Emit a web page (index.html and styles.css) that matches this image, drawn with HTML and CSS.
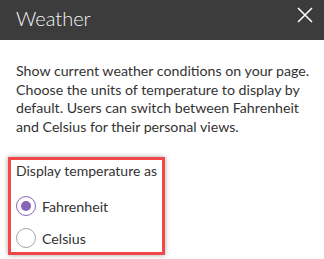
FILE: index.html
```
<!DOCTYPE html>
<html>
<head>
<meta charset="utf-8">
<link rel="stylesheet" href="styles.css">
</head>
<body>
<div class="panel">
  <header class="head">
    <h1 class="title">Weather</h1>
    <button class="close" aria-label="Close">
      <svg width="16" height="16" viewBox="0 0 16 16"><path d="M1 1 L15 15 M15 1 L1 15" stroke="#ffffff" stroke-width="1.5" fill="none"/></svg>
    </button>
  </header>
  <div class="content">
    <p class="desc">Show current weather conditions on your page. Choose the units of temperature to display by default. Users can switch between Fahrenheit and Celsius for their personal views.</p>
    <div class="box">
      <div class="label">Display temperature as</div>
      <div class="options">
        <div class="opt"><span class="radio on"></span><span class="opt-text">Fahrenheit</span></div>
        <div class="opt"><span class="radio"></span><span class="opt-text">Celsius</span></div>
      </div>
    </div>
  </div>
</div>
</body>
</html>
```
FILE: styles.css
```
html, body { margin: 0; padding: 0; background: #ffffff; }
body { font-family: "Lato", "Liberation Sans", sans-serif; color: #333333; width: 324px; height: 259px; overflow: hidden; }
.head { height: 40px; background: #3c3c3c; display: flex; align-items: center; justify-content: space-between; padding: 0 11px 0 16px; box-sizing: border-box; }
.title { margin: 0; font-size: 20px; font-weight: 300; color: #f4f4f4; line-height: 26px; position: relative; top: -2px; }
.close { background: none; border: 0; padding: 0; width: 16px; height: 16px; display: flex; position: relative; top: -5px; }
.content { padding: 0 8px; }
.desc { margin: 22px 0 0 8px; font-size: 14.2px; line-height: 18.5px; }
.box { margin-top: 21px; width: 157px; height: 98px; box-sizing: border-box; border: 3px solid #f24848; box-shadow: 0 0 5px rgba(0,0,0,0.35); padding: 1px 0 0 5px; display: flex; flex-direction: column; }
.label { font-size: 14px; line-height: 19px; white-space: nowrap; }
.options { display: flex; flex-direction: column; gap: 12px; margin-top: 16px; }
.opt { display: flex; align-items: center; gap: 6px; height: 20px; font-size: 14.2px; }
.radio { width: 20px; height: 20px; box-sizing: border-box; border: 1px solid #a6a6a6; border-radius: 50%; position: relative; flex: none; }
.radio.on { border-color: #8764b8; }
.radio.on::after { content: ""; position: absolute; left: 4px; top: 4px; width: 10px; height: 10px; border-radius: 50%; background: #8764b8; }
```
